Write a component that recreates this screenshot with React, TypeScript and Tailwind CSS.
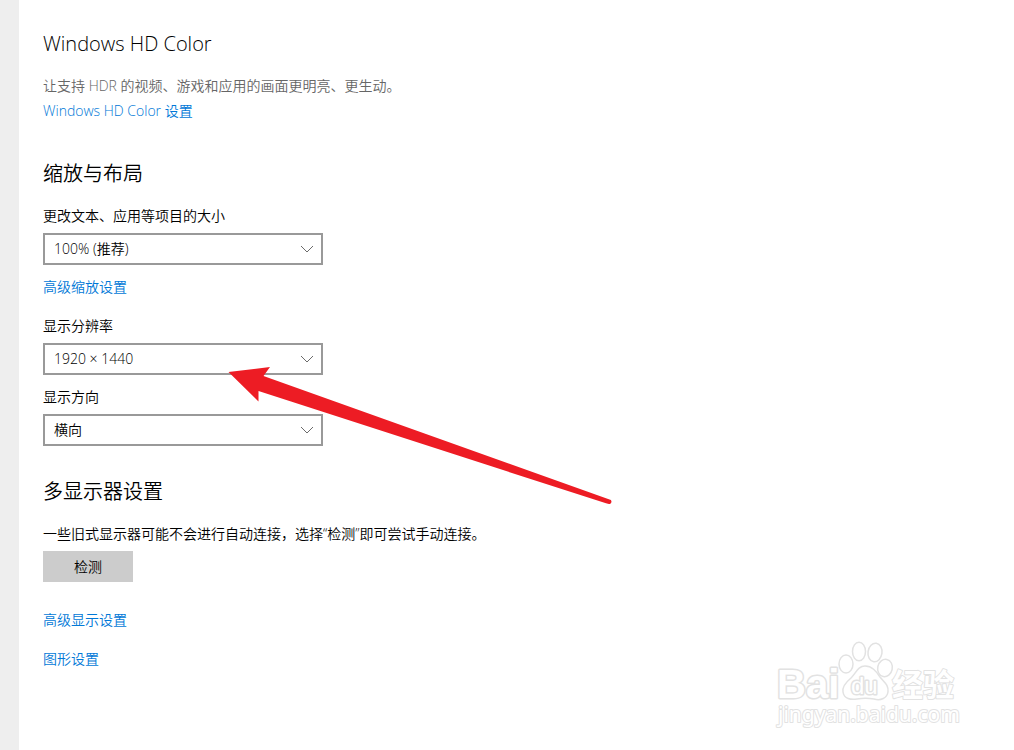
import React, { useId } from "react";

function Heading({ children }: { children: React.ReactNode }) {
  return <h2 className="mb-[18px] text-xl leading-7 font-[350]">{children}</h2>;
}

function SettingsLink({ children }: { children: React.ReactNode }) {
  return (
    <a href="#" className="block w-fit text-[#0078d7] hover:text-[#666666]">
      {children}
    </a>
  );
}

function SelectField({ label, options }: { label: string; options: string[] }) {
  const id = useId();
  return (
    <div>
      <label htmlFor={id} className="mb-[7px] block">
        {label}
      </label>
      <div className="relative w-full max-w-[280px]">
        <select
          id={id}
          className="block h-8 w-full appearance-none border-2 border-[#999999] bg-white pr-8 pl-[9px] text-black outline-none"
        >
          {options.map((option) => (
            <option key={option}>{option}</option>
          ))}
        </select>
        <svg
          viewBox="0 0 14 8"
          className="pointer-events-none absolute top-3 right-[9px] h-2 w-[14px]"
          fill="none"
          stroke="#6b6b6b"
          aria-hidden="true"
        >
          <path d="M1 1l6 6 6-6" />
        </svg>
      </div>
    </div>
  );
}

function Arrow() {
  return (
    <svg
      viewBox="0 0 384 138"
      className="pointer-events-none absolute top-[366px] left-[228px] h-[138px] w-96"
      fill="#ed1c24"
      aria-hidden="true"
    >
      <path d="M0.5 6L42 1L35.500 10L381.500 133.600A2 2 0 0 1 381 138L378 137.300L30.500 25V35.500Z" />
    </svg>
  );
}

function Watermark() {
  return (
    <svg
      viewBox="0 0 190 94"
      className="pointer-events-none absolute right-[50px] bottom-[16px] h-[94px] w-[190px]"
      fill="#ffffff"
      stroke="#e2e2e2"
      strokeWidth="1.500"
      strokeLinejoin="round"
      role="img"
      aria-label="Baidu 经验"
    >
      <g className="[font-family:'Liberation_Sans','Noto_Sans_CJK_SC',sans-serif]">
        <text x="3" y="58" fontSize="40" fontWeight="700" strokeWidth="3" className="[paint-order:stroke]">
          Bai
        </text>
        <ellipse cx="72" cy="24" rx="7" ry="9" />
        <ellipse cx="85" cy="11.500" rx="6.500" ry="9.300" />
        <ellipse cx="101" cy="12.500" rx="7" ry="9.300" transform="rotate(8 101 12.500)" />
        <ellipse cx="111" cy="28" rx="7.300" ry="8.800" transform="rotate(12 111 28)" />
        <path d="M91 26C84 26 82 33 77 38C71 43 68 47 69 52C70 59 77 60 83 59C89 58 94 58 100 59C107 61 113 58 114 52C115 45 110 42 106 37C102 31 98 26 91 26Z" />
        <text x="77" y="54" fontSize="24" fontWeight="400" strokeWidth="3" className="[paint-order:stroke]">
          du
        </text>
        <text x="118" y="56" fontSize="31" fontWeight="700" strokeWidth="2" className="[paint-order:stroke]">
          经验
        </text>
      </g>
      <text
        x="4"
        y="82"
        fontSize="21"
        fontWeight="400"
        className="[font-family:'Noto_Sans',sans-serif] [paint-order:stroke]"
        strokeWidth="2"
      >
        jingyan.baidu.com
      </text>
    </svg>
  );
}

export default function App() {
  return (
    <div className="relative flex min-h-screen bg-white text-sm leading-5 font-[350] text-black [font-family:'Open_Sans','Noto_Sans_CJK_SC',sans-serif]">
      <div className="w-[19px] shrink-0 bg-[#eeeeee]" />
      <main className="min-w-0 flex-1 px-6 pt-[30px] pb-20">
        <section>
          <Heading>Windows HD Color</Heading>
          <p className="mb-[5px] text-[#666666]">
            让支持 HDR 的视频、游戏和应用的画面更明亮、更生动。
          </p>
          <SettingsLink>Windows HD Color 设置</SettingsLink>
        </section>

        <section className="mt-[39px]">
          <Heading>缩放与布局</Heading>
          <SelectField label="更改文本、应用等项目的大小" options={["100% (推荐)", "125%", "150%"]} />
          <div className="mt-3 mb-[19px]">
            <SettingsLink>高级缩放设置</SettingsLink>
          </div>
          <div className="flex flex-col gap-3">
            <SelectField label="显示分辨率" options={["1920 × 1440", "1920 × 1080", "1280 × 720"]} />
            <SelectField label="显示方向" options={["横向", "纵向"]} />
          </div>
        </section>

        <section className="mt-8">
          <Heading>多显示器设置</Heading>
          <p className="mb-[7px]">一些旧式显示器可能不会进行自动连接，选择“检测”即可尝试手动连接。</p>
          <button type="button" className="h-[31px] w-[90px] bg-[#cccccc]">
            检测
          </button>
          <div className="mt-7 flex flex-col gap-[19px]">
            <SettingsLink>高级显示设置</SettingsLink>
            <SettingsLink>图形设置</SettingsLink>
          </div>
        </section>
      </main>
      <Arrow />
      <Watermark />
    </div>
  );
}
